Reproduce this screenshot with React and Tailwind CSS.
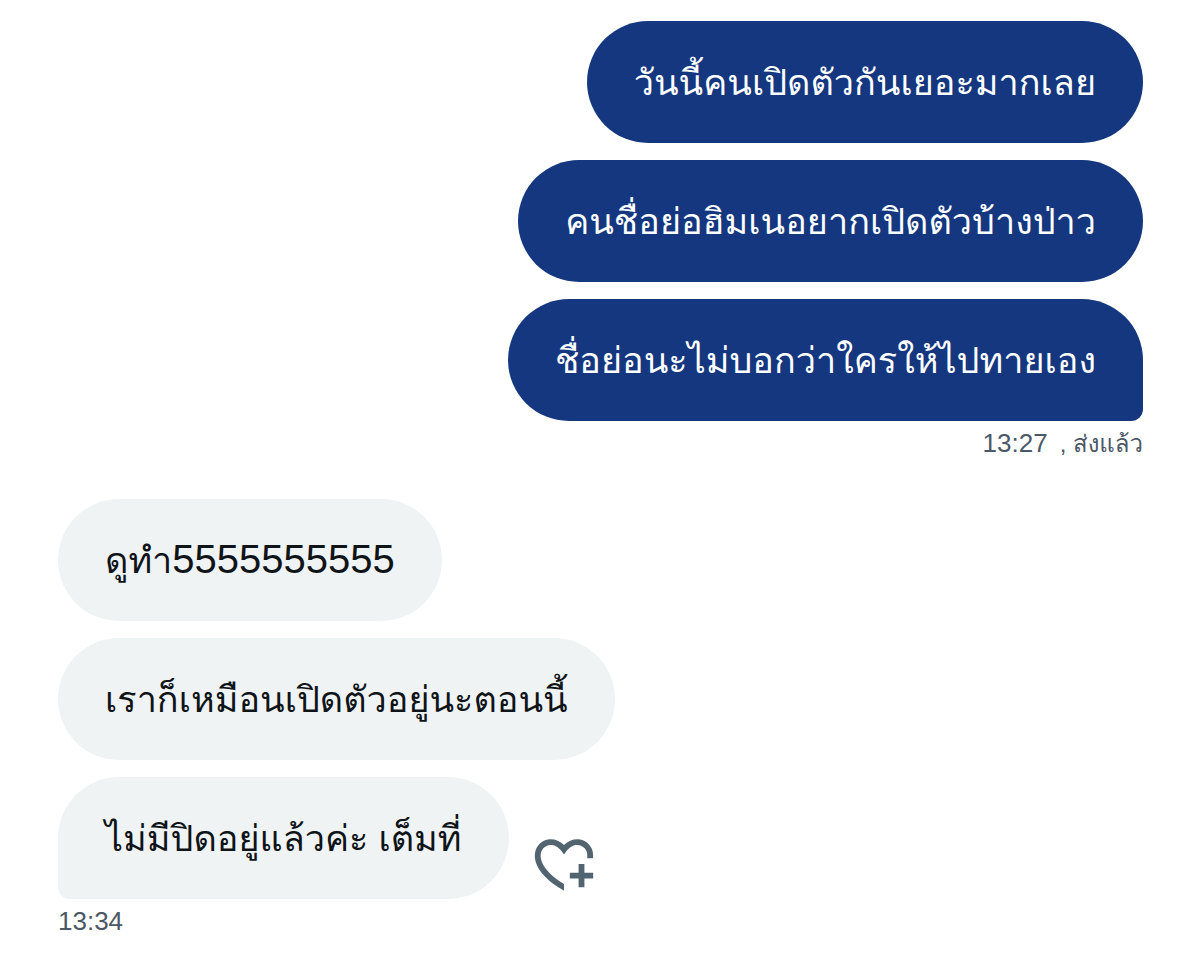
const sent = "bg-[#14377f] text-white";
const received = "bg-[#eff3f4] text-[#0f1419]";
const roundCorners = "rounded-[61px]";
const sentTail = "rounded-t-[61px] rounded-bl-[61px] rounded-br-xl";
const receivedTail = "rounded-t-[61px] rounded-br-[61px] rounded-bl-xl";

function Bubble({ children, mine, tail }) {
  const corners = !tail ? roundCorners : mine ? sentTail : receivedTail;
  return (
    <p className={`px-[47px] pt-9 pb-[34px] text-4xl leading-[52px] ${mine ? sent : received} ${corners}`}>
      {children}
    </p>
  );
}

export default function App() {
  return (
    <main className="min-h-screen bg-white pl-[58px] pr-[57px] pt-[21px] font-['Liberation_Sans','Loma',sans-serif]">
      <section className="flex flex-col items-end gap-[17px]">
        <Bubble mine>วันนี้คนเปิดตัวกันเยอะมากเลย</Bubble>
        <Bubble mine>คนชื่อย่อฮิมเนอยากเปิดตัวบ้างป่าว</Bubble>
        <Bubble mine tail>ชื่อย่อนะไม่บอกว่าใครให้ไปทายเอง</Bubble>
      </section>
      <div className="mt-1 flex h-9 items-baseline justify-end gap-3 text-[26px] leading-9 text-[#4b5966]">
        <time>13:27</time>
        <span className="text-2xl leading-9">, ส่งแล้ว</span>
      </div>
      <section className="mt-[38px] flex flex-col items-start gap-[17px]">
        <Bubble>ดูทำ<span className="text-[40px] leading-none">5555555555</span></Bubble>
        <Bubble>เราก็เหมือนเปิดตัวอยู่นะตอนนี้</Bubble>
        <div className="flex items-end gap-5">
          <Bubble tail>ไม่มีปิดอยู่แล้วค่ะ เต็มที่</Bubble>
          <button type="button" aria-label="Add reaction" className="text-[#536471]">
            <svg className="block size-[70px]" viewBox="0 0 24 24" fill="currentColor" aria-hidden="true">
              <path d="M17 12v3h-2.998v2h3v3h2v-3h3v-2h-3.001v-3H17zm-5 6.839c-3.871-2.34-6.053-4.639-7.127-6.609-1.112-2.04-1.031-3.7-.479-4.82.561-1.13 1.667-1.84 2.91-1.91 1.222-.06 2.68.51 3.892 2.16l.806 1.09.805-1.09c1.211-1.65 2.668-2.22 3.89-2.16 1.242.07 2.347.78 2.908 1.91.334.677.49 1.554.321 2.59h2.011c.153-1.283-.039-2.469-.539-3.48-.887-1.79-2.647-2.91-4.601-3.01-1.65-.09-3.367.56-4.796 2.01-1.43-1.45-3.147-2.1-4.798-2.01-1.954.1-3.714 1.22-4.601 3.01-.896 1.81-.846 4.17.514 6.67 1.353 2.48 4.003 5.12 8.382 7.67l.502.299v-2.32z" />
            </svg>
          </button>
        </div>
      </section>
      <time className="mt-1 block text-[26px] leading-9 text-[#4b5966]">13:34</time>
    </main>
  );
}
